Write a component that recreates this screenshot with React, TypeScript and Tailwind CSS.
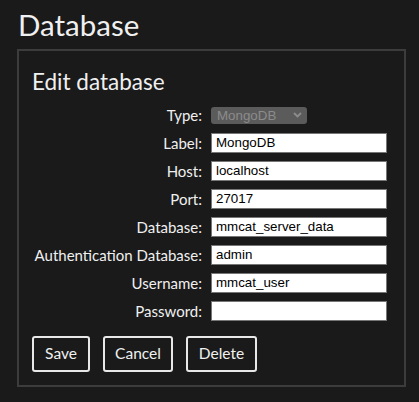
import React from "react";

const rows: [string, string][] = [
  ["Label:", "MongoDB"],
  ["Host:", "localhost"],
  ["Port:", "27017"],
  ["Database:", "mmcat_server_data"],
  ["Authentication Database:", "admin"],
  ["Username:", "mmcat_user"],
  ["Password:", ""],
];

const arial = { fontFamily: '"Liberation Sans", Arial, sans-serif' };

export default function App() {
  return (
    <div
      className="min-h-[402px] w-[419px] bg-[#1a1a1a] text-[#f0f0f0] pt-[6px] pl-[17px]"
      style={{ fontFamily: 'Lato, "Noto Sans", sans-serif' }}
    >
      <h1 className="text-[29.5px] leading-[38px] pl-[1px] mb-[5px]">Database</h1>
      <div className="w-[389px] h-[338px] border-2 border-[#3c3c3c] pt-[17px] pl-[13px]">
        <h2 className="text-[22.5px] leading-[28px] mb-[9px]">Edit database</h2>
        <div className="grid grid-cols-[170px_176px] gap-x-[9px] gap-y-[8px] items-center text-[15px]">
          <div className="text-right leading-[20px]">Type:</div>
          <div>
            <div className="w-[96px] h-[17px] rounded-[3px] bg-[#5b5b5b] text-[#8c8c8c] flex items-center justify-between pl-[6px] pr-[5px] text-[13.33px]" style={arial}>
              <span className="leading-[17px]">MongoDB</span>
              <svg width="9" height="6" viewBox="0 0 9 6"><path d="M1 1l3.5 3.5L8 1" stroke="#8c8c8c" strokeWidth="1.8" fill="none" /></svg>
            </div>
          </div>
          {rows.map(([l, v]) => (
            <React.Fragment key={l}>
              <div className="text-right leading-[20px] whitespace-nowrap">{l}</div>
              <div className="h-[20px] bg-white border border-[#767676] px-[4px] text-black text-[13.33px] leading-[18px]" style={arial}>
                {v}
              </div>
            </React.Fragment>
          ))}
        </div>
        <div className="flex gap-[13px] mt-[15px]">
          {[["Save", "w-[58px]"], ["Cancel", "w-[70px]"], ["Delete", "w-[71px]"]].map(([b, w]) => (
            <div key={b} className={`${w} h-[36px] border-2 border-[#e8e8e8] rounded-[3px] flex items-center justify-center text-[15.5px]`}>
              {b}
            </div>
          ))}
        </div>
      </div>
    </div>
  );
}
